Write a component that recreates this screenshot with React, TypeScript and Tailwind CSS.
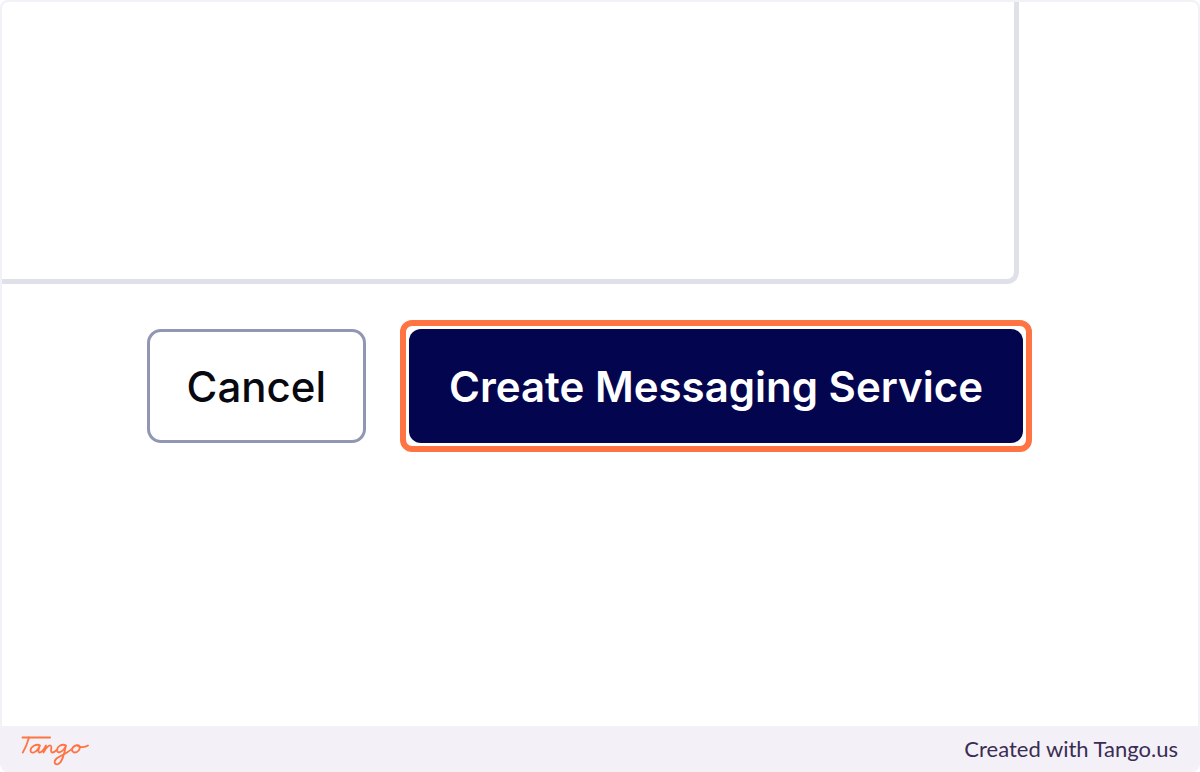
function TangoLogo() {
  return (
    <svg
      className="h-9 w-[70px]"
      viewBox="0 0 70 36"
      fill="none"
      stroke="currentColor"
      strokeLinecap="round"
      strokeLinejoin="round"
      role="img"
      aria-label="Tango"
    >
      <path strokeWidth="2" d="M2.500 7.500H30" />
      <path
        strokeWidth="1.8"
        d="M9 7.500C7.500 13 5.500 18 2.800 22.500M20 15.500C16.500 13.200 10.500 17 10.500 20.500C10.500 24 15.500 23 18 19L20 15.500C18.500 19 17.500 22.500 19.500 22.500C22.500 22.500 24.500 18 26 15.500L23.500 22.500C25.500 19 28.500 15 30.500 15.500C33 16.200 29.300 22 32 22.500C34.500 22.800 36 20.500 37.500 19M46 15.500C42 13.200 36.500 17 37 20.500C37.500 24 43 22.500 46 15.500C44.500 22 42.500 33.500 37.500 34.300C34 34.700 33.800 31 36.500 28.500C41 25 48 23.500 52.500 18C54.500 15.500 58 14 59.500 16C61 19 57.500 22.800 54.500 22.500C50.500 22 51.500 16.500 56.500 15.200C58.500 17 64 18.200 68 15.500"
      />
    </svg>
  );
}

export default function App() {
  return (
    <div className="flex min-h-screen flex-col overflow-hidden rounded-lg border-2 border-[#f3f1f7] bg-white font-['Inter',sans-serif]">
      <main className="flex-1">
        <section className="mr-[179px] h-[282px] rounded-br-xl border-r-[5px] border-b-[5px] border-[#dfe1e9]" />
        <div className="mr-[166px] mt-9 flex items-center justify-end gap-[34px]">
          <button
            type="button"
            className="h-[114px] rounded-[14px] border-[3px] border-[#9197b3] px-[37px] text-[42px] font-medium text-[#080810]"
          >
            Cancel
          </button>
          <div className="rounded-xl border-[6px] border-[#ff7442] p-[3px]">
            <button
              type="button"
              className="h-[114px] rounded-xl bg-[#03064f] px-10 text-[42px] font-semibold text-white"
            >
              Create Messaging Service
            </button>
          </div>
        </div>
      </main>
      <footer className="flex h-11 items-center justify-between bg-[#f3f1f7] pr-5 pl-[18px] text-[#ff7442]">
        <TangoLogo />
        <p className="font-['Lato',sans-serif] text-[22px] text-[#3b2c55]">Created with Tango.us</p>
      </footer>
    </div>
  );
}
